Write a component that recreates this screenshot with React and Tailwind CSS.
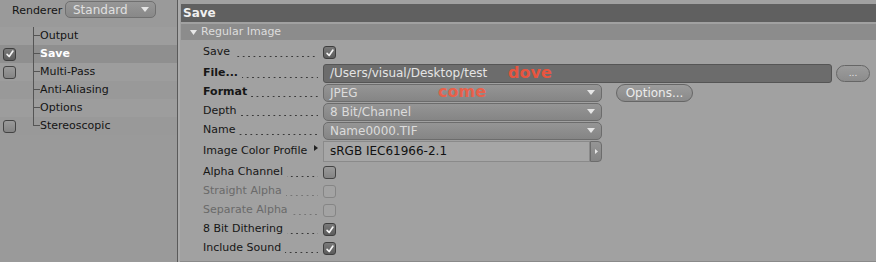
import React from 'react';

const FONT = { fontFamily: '"DejaVu Sans", "Liberation Sans", sans-serif' };

const Check = () => (
  <svg viewBox="0 0 12 12" className="w-[10px] h-[10px]">
    <path d="M2.5 6.5 L5 9 L9.5 2.5" fill="none" stroke="#f4f4f4" strokeWidth="2" strokeLinecap="round" strokeLinejoin="round" />
  </svg>
);

const Checkbox = ({ checked, disabled }) => (
  <div
    className={`w-[13px] h-[13px] rounded-[3px] border flex items-center justify-center ${
      disabled
        ? 'border-[#858585] bg-[#a3a3a3]'
        : checked
        ? 'border-[#3e3e3e] bg-gradient-to-b from-[#7a7a7a] to-[#5c5c5c]'
        : 'border-[#444] bg-gradient-to-b from-[#9a9a9a] to-[#848484]'
    }`}
  >
    {checked && <Check />}
  </div>
);

const Caret = () => (
  <svg viewBox="0 0 8 5" className="w-[8px] h-[5px]">
    <path d="M0 0 L8 0 L4 5 Z" fill="#e6e6e6" />
  </svg>
);

const Dropdown = ({ value }) => (
  <div className="w-[279px] h-[18px] rounded-[5px] border border-[#6c6c6c] bg-gradient-to-b from-[#959595] to-[#858585] flex items-center justify-between pl-[6px] pr-[6px] text-[#dcdcdc] text-[12px]">
    <span>{value}</span>
    <Caret />
  </div>
);

const SIDEBAR = [
  { label: 'Output', box: false },
  { label: 'Save', box: true, checked: true, active: true },
  { label: 'Multi-Pass', box: true },
  { label: 'Anti-Aliasing', box: false },
  { label: 'Options', box: false },
  { label: 'Stereoscopic', box: true, last: true },
];

// dotted leader drawn as a repeating dot background
const Leader = ({ disabled }) => (
  <span
    className={`flex-1 h-[11px] ml-[4px] bg-repeat-x bg-bottom bg-[length:5.4px_3px] ${
      disabled
        ? 'bg-[radial-gradient(circle,#757575_0.7px,transparent_1.1px)]'
        : 'bg-[radial-gradient(circle,#3a3a3a_0.7px,transparent_1.1px)]'
    }`}
  />
);

const Label = ({ text, bold, disabled, dots = true, children }) => (
  <div className="w-[143px] pl-[23px] pr-[5px] flex items-center shrink-0">
    <span className={`whitespace-nowrap ${bold ? 'font-bold' : ''} ${disabled ? 'text-[#6a6a6a]' : 'text-[#161616]'}`}>
      {text}
    </span>
    {dots && <Leader disabled={disabled} />}
    {children}
  </div>
);

export default function App() {
  return (
    <div className="w-[876px] h-[262px] flex bg-[#a1a1a1] text-[11px] overflow-hidden" style={FONT}>
      {/* Sidebar */}
      <div className="w-[177px] shrink-0 bg-[#9a9a9a] flex flex-col">
        <div className="h-[27px] flex items-start pt-[1px]">
          <span className="ml-[12px] mt-[2px] text-[#141414] w-[53px]">Renderer</span>
          <div className="w-[91px] h-[17px] rounded-[5px] border border-[#707070] bg-gradient-to-b from-[#979797] to-[#888888] flex items-center justify-between pl-[7px] pr-[6px] text-[#e0e0e0] text-[12px]">
            <span>Standard</span>
            <Caret />
          </div>
        </div>
        {SIDEBAR.map((r, i) => (
          <div
            key={r.label}
            className={`h-[18px] flex items-stretch ${r.active ? 'bg-[#8f8f8f]' : i % 2 === 0 ? 'bg-[#9d9d9d]' : 'bg-[#999999]'}`}
          >
            <div className="w-[33px] flex items-center pl-[3px]">
              {r.box && <Checkbox checked={r.checked} />}
            </div>
            <div className="w-[7px] flex flex-col">
              <div className="h-[9px] border-l border-b border-[#555]" />
              <div className={`flex-1 ${r.last ? '' : 'border-l border-[#555]'}`} />
            </div>
            <div className={`flex items-center ${r.active ? 'text-white font-bold' : 'text-[#141414]'}`}>{r.label}</div>
          </div>
        ))}
        <div className="flex-1" />
      </div>

      {/* Separator */}
      <div className="w-[1px] bg-[#5a5a5a] shrink-0" />
      <div className="w-[2px] bg-[#ababab] shrink-0" />

      {/* Main */}
      <div className="flex-1 flex flex-col pt-[4px] border-b border-[#8a8a8a]">
        <div className="h-[18px] bg-[#606060] ml-[1px] flex items-center pl-[2px] text-[#efefef] font-bold text-[12px]">Save</div>
        <div className="h-[16px] mt-[2px] ml-[1px] bg-[#8c8c8c] flex items-center pl-[9px] text-[#dddddd]">
          <svg viewBox="0 0 7 5" className="w-[7px] h-[5px] mr-[4px]">
            <path d="M0 0 L7 0 L3.5 5 Z" fill="#e8e8e8" />
          </svg>
          Regular Image
        </div>

        <div className="h-[21px] mt-[2px] flex items-center">
          <Label text="Save" />
          <Checkbox checked />
        </div>

        <div className="h-[20px] flex items-center">
          <Label text="File..." bold />
          <div className="w-[509px] h-[19px] rounded-[3px] border border-[#555] bg-[#6c6c6c] flex items-center pl-[6px] text-[#e4e4e4] text-[12px]">
            <span className="w-[178px]">/Users/visual/Desktop/test</span>
            <span className="text-[#e8553f] font-bold text-[16px] leading-none">dove</span>
          </div>
          <div className="ml-[4px] w-[34px] h-[17px] rounded-full border border-[#666] bg-gradient-to-b from-[#9c9c9c] to-[#8c8c8c] flex items-center justify-center text-[#e6e6e6] text-[9px] leading-none">
            ...
          </div>
        </div>

        <div className="h-[19px] flex items-center">
          <Label text="Format" bold />
          <div className="w-[279px] h-[18px] rounded-[5px] border border-[#6c6c6c] bg-gradient-to-b from-[#959595] to-[#858585] flex items-center pl-[6px] pr-[6px] text-[#dcdcdc] text-[12px]">
            <span className="w-[108px]">JPEG</span>
            <span className="flex-1 text-[#e8604a] font-bold text-[16px] leading-none -mt-[2px]">come</span>
            <Caret />
          </div>
          <div className="ml-[14px] w-[77px] h-[18px] rounded-full border border-[#666] bg-gradient-to-b from-[#9c9c9c] to-[#8a8a8a] flex items-center justify-center text-[#ececec] text-[12px]">
            Options...
          </div>
        </div>

        <div className="h-[19px] flex items-center">
          <Label text="Depth" />
          <Dropdown value="8 Bit/Channel" />
        </div>

        <div className="h-[19px] flex items-center">
          <Label text="Name" />
          <Dropdown value="Name0000.TIF" />
        </div>

        <div className="h-[22px] flex items-center">
          <Label text="Image Color Profile" dots={false}>
            <div className="flex-1" />
            <svg viewBox="0 0 4 6" className="w-[4px] h-[6px] mb-[6px]">
              <path d="M0 0 L4 3 L0 6 Z" fill="#222" />
            </svg>
          </Label>
          <div className="flex h-[21px]">
            <div className="w-[267px] border border-[#8a8a8a] bg-[#a6a6a6] flex items-center pl-[6px] text-[#111] text-[12px]">
              sRGB IEC61966-2.1
            </div>
            <div className="w-[12px] rounded-r-[4px] border border-[#6c6c6c] bg-gradient-to-b from-[#959595] to-[#858585] flex items-center justify-center">
              <svg viewBox="0 0 3 5" className="w-[3px] h-[5px]">
                <path d="M0 0 L3 2.5 L0 5 Z" fill="#e6e6e6" />
              </svg>
            </div>
          </div>
        </div>

        <div className="h-[20px] flex items-center">
          <Label text="Alpha Channel" />
          <Checkbox />
        </div>
        <div className="h-[19px] flex items-center">
          <Label text="Straight Alpha" disabled />
          <Checkbox disabled />
        </div>
        <div className="h-[19px] flex items-center">
          <Label text="Separate Alpha" disabled />
          <Checkbox disabled />
        </div>
        <div className="h-[19px] flex items-center">
          <Label text="8 Bit Dithering" />
          <Checkbox checked />
        </div>
        <div className="h-[19px] flex items-center">
          <Label text="Include Sound" />
          <Checkbox checked />
        </div>
      </div>
    </div>
  );
}
